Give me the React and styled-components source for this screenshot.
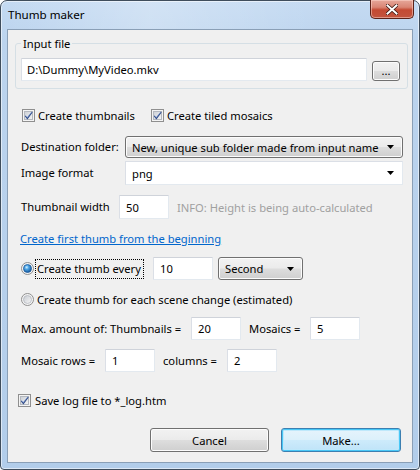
import React from 'react';
import styled, { createGlobalStyle } from 'styled-components';

const GlobalStyle = createGlobalStyle`
  html, body {
    margin: 0;
    padding: 0;
    background: #ffffff;
  }
  body {
    font-family: "Noto Sans", "Liberation Sans", sans-serif;
    font-size: 11.2px;
    color: #000;
  }
  svg {
    flex: none;
  }
`;

const Window = styled.div`
  width: 420px;
  height: 470px;
  box-sizing: border-box;
  display: flex;
  flex-direction: column;
  padding: 0 6px 6px;
  border: 1px solid #3f4d5c;
  border-radius: 7px 7px 4px 4px;
  background: linear-gradient(180deg, #c4daf2 0px, #bcd4ee 40px, #b2cdea 100%);
  box-shadow: inset 0 0 0 1px rgba(255, 255, 255, 0.55);
`;

const TitleBar = styled.div`
  height: 28px;
  display: flex;
  justify-content: space-between;
  align-items: flex-start;
  background: linear-gradient(90deg, rgba(255, 255, 255, 0) 0%, rgba(255, 255, 255, 0.25) 35%, rgba(255, 255, 255, 0) 80%);
`;

const Title = styled.div`
  padding: 6px 0 0 1px;
  font-size: 11.6px;
  line-height: 16px;
`;

const CloseButton = styled.div`
  width: 44px;
  height: 19px;
  margin: -1px -1px 0 0;
  box-sizing: border-box;
  display: flex;
  align-items: center;
  justify-content: center;
  border: 1px solid #5b2219;
  border-top: none;
  border-radius: 0 0 5px 5px;
  background: linear-gradient(180deg, #e6a79a 0%, #d98574 40%, #c44a33 55%, #c2543f 100%);
  box-shadow: inset 0 0 0 1px rgba(255, 220, 210, 0.5);
`;

const Client = styled.div`
  flex: 1;
  display: flex;
  flex-direction: column;
  padding: 6px 5px 0 7px;
  background: #f0f0f0;
  border: 1px solid #8a9fb6;
`;

const GroupBox = styled.fieldset`
  margin: 0;
  padding: 0 7px 7px 5px;
  border: 1px solid #d5dfe5;
  border-radius: 3px;
  display: flex;
  align-items: center;
  gap: 5px;
`;

const Legend = styled.legend`
  padding: 0 2px;
  line-height: 15px;
`;

const Form = styled.div`
  display: flex;
  flex-direction: column;
  padding: 0 4px 0 6px;
`;

const Row = styled.div`
  display: flex;
  align-items: center;
  gap: ${p => p.$gap ?? 8}px;
  margin-top: ${p => p.$top ?? 0}px;
  margin-left: ${p => p.$left ?? 0}px;
  height: ${p => p.$height ?? 16}px;
`;

const Label = styled.span`
  flex: none;
  width: ${p => (p.$width ? `${p.$width}px` : 'auto')};
  white-space: nowrap;
  line-height: 16px;
`;

const Info = styled.span`
  color: #a0a0a0;
  white-space: nowrap;
`;

const TextBox = styled.div`
  flex: none;
  box-sizing: border-box;
  width: ${p => p.$width}px;
  height: ${p => p.$height ?? 23}px;
  display: flex;
  align-items: center;
  padding-left: ${p => p.$pad ?? 6}px;
  background: #ffffff;
  border: 1px solid;
  border-color: #cfd3da #e3e9ef #e3e9ef #dbdfe6;
  border-radius: 1px;
  white-space: nowrap;
`;

const Button = styled.div`
  flex: none;
  box-sizing: border-box;
  width: ${p => p.$width}px;
  height: ${p => p.$height ?? 24}px;
  display: flex;
  align-items: center;
  justify-content: ${p => (p.$left ? 'space-between' : 'center')};
  padding: ${p => (p.$left ? '0 8px 0 6px' : '0')};
  border: 1px solid #707070;
  border-radius: 3px;
  background: linear-gradient(180deg, #f2f2f2 0%, #ebebeb 48%, #dddddd 52%, #cfcfcf 100%);
  box-shadow: inset 0 0 0 1px #fcfcfc;
  white-space: nowrap;
`;

const DefaultButton = styled(Button)`
  border-color: #3c7fb1;
  background: linear-gradient(180deg, #e6f4fc 0%, #dcf0fb 48%, #cdebfb 52%, #bfe3f8 100%);
  box-shadow: inset 0 0 0 1px #48c7f6, inset 0 0 0 2px #bfe8fb;
`;

const Combo = styled.div`
  flex: 1;
  box-sizing: border-box;
  height: 24px;
  display: flex;
  align-items: center;
  justify-content: space-between;
  padding: 0 8px 0 6px;
  background: #ffffff;
  border: 1px solid;
  border-color: #dbdfe6 #e3e9ef #e3e9ef #dbdfe6;
`;

const Link = styled.a`
  color: #0066cc;
  text-decoration: underline;
  line-height: 16px;
  cursor: pointer;
`;

const Option = styled.label`
  flex: none;
  display: flex;
  align-items: center;
  gap: ${p => p.$gap ?? 3}px;
  width: ${p => (p.$width ? `${p.$width}px` : 'auto')};
  white-space: nowrap;
`;

const Focused = styled.span`
  outline: 1px dotted #000;
  outline-offset: 1px;
  line-height: 16px;
  padding-right: 1px;
`;

const Footer = styled.div`
  display: flex;
  justify-content: flex-end;
  gap: 12px;
  margin-top: 20px;
  padding-right: 2px;
`;

const CloseIcon = () => (
  <svg width="12" height="11" viewBox="0 0 12 11">
    <path d="M1.5 1.5 L10.5 9.5 M10.5 1.5 L1.5 9.5" stroke="#3a1610" strokeWidth="3.6" strokeLinecap="square" />
    <path d="M1.5 1.5 L10.5 9.5 M10.5 1.5 L1.5 9.5" stroke="#ffffff" strokeWidth="2" strokeLinecap="square" />
  </svg>
);

const Arrow = () => (
  <svg width="7" height="4" viewBox="0 0 7 4">
    <path d="M0 0 H7 L3.5 4 Z" fill="#000" />
  </svg>
);

const CheckBox = () => (
  <svg width="13" height="13" viewBox="0 0 13 13">
    <defs>
      <linearGradient id="cbIn" x1="0" y1="0" x2="1" y2="1">
        <stop offset="0" stopColor="#cbcfd5" />
        <stop offset="1" stopColor="#f6f6f6" />
      </linearGradient>
    </defs>
    <rect x="0.5" y="0.5" width="12" height="12" fill="#f4f4f4" stroke="#8f8f8f" />
    <rect x="2.5" y="2.5" width="8" height="8" fill="url(#cbIn)" stroke="#b4b8bf" />
    <path d="M3 6.2 L5.3 8.6 L10 2.6 L10.6 3.6 L5.4 10.4 L3 7.6 Z" fill="#2f4a86" />
    <path d="M4 7 L5.3 8.4 L9.6 3.2" stroke="#6d8fd0" strokeWidth="0.6" fill="none" />
  </svg>
);

const Radio = ({ checked }) => (
  <svg width="13" height="13" viewBox="0 0 13 13">
    <defs>
      <radialGradient id="rdOn" cx="0.4" cy="0.35" r="0.7">
        <stop offset="0" stopColor="#d8f4ff" />
        <stop offset="0.35" stopColor="#4fa7e8" />
        <stop offset="1" stopColor="#0d4f93" />
      </radialGradient>
      <linearGradient id="rdOff" x1="0" y1="0" x2="1" y2="1">
        <stop offset="0" stopColor="#c7cbd1" />
        <stop offset="1" stopColor="#f7f7f7" />
      </linearGradient>
    </defs>
    <circle cx="6.5" cy="6.5" r="6" fill="#f4f4f4" stroke="#8f8f8f" />
    <circle cx="6.5" cy="6.5" r="4" fill={checked ? 'url(#rdOn)' : 'url(#rdOff)'} stroke={checked ? '#1f5c9c' : '#b4b8bf'} strokeWidth="0.8" />
  </svg>
);

const App = () => (
  <>
    <GlobalStyle />
    <Window>
      <TitleBar>
        <Title>Thumb maker</Title>
        <CloseButton>
          <CloseIcon />
        </CloseButton>
      </TitleBar>
      <Client>
        <GroupBox>
          <Legend>Input file</Legend>
          <TextBox $width={346} $pad={5} style={{ marginTop: 7 }}>D:\Dummy\MyVideo.mkv</TextBox>
          <Button $width={28} $height={20} style={{ marginTop: 9 }}>...</Button>
        </GroupBox>
        <Form>
          <Row $top={18} $left={1} $gap={17}>
            <Option $width={112}>
              <CheckBox />
              Create thumbnails
            </Option>
            <Option>
              <CheckBox />
              Create tiled mosaics
            </Option>
          </Row>
          <Row $top={13} $height={22} $gap={0}>
            <Label $width={104}>Destination folder:</Label>
            <Button $width={278} $height={22} $left>
              New, unique sub folder made from input name
              <Arrow />
            </Button>
          </Row>
          <Row $top={3} $height={24} $gap={0}>
            <Label $width={104}>Image format</Label>
            <Combo>
              png
              <Arrow />
            </Combo>
          </Row>
          <Row $top={10} $height={24}>
            <Label $width={90}>Thumbnail width</Label>
            <TextBox $width={50} $height={24}>50</TextBox>
            <Info>INFO: Height is being auto-calculated</Info>
          </Row>
          <Row $top={12} $left={-1}>
            <Link>Create first thumb from the beginning</Link>
          </Row>
          <Row $top={10} $height={23} $gap={0}>
            <Option $width={132}>
              <Radio checked />
              <Focused>Create thumb every</Focused>
            </Option>
            <TextBox $width={60}>10</TextBox>
            <Button $width={85} $height={23} $left style={{ marginLeft: 5 }}>
              Second
              <Arrow />
            </Button>
          </Row>
          <Row $top={11}>
            <Option>
              <Radio />
              Create thumb for each scene change (estimated)
            </Option>
          </Row>
          <Row $top={10} $height={23}>
            <Label $width={162}>Max. amount of: Thumbnails =</Label>
            <TextBox $width={50}>20</TextBox>
            <Label $width={53}>Mosaics =</Label>
            <TextBox $width={50}>5</TextBox>
          </Row>
          <Row $top={9} $height={23}>
            <Label $width={76}>Mosaic rows =</Label>
            <TextBox $width={50}>1</TextBox>
            <Label $width={56}>columns =</Label>
            <TextBox $width={50}>2</TextBox>
          </Row>
          <Row $top={20} $left={-3}>
            <Option $gap={4}>
              <CheckBox />
              Save log file to *_log.htm
            </Option>
          </Row>
          <Footer>
            <Button $width={119}>Cancel</Button>
            <DefaultButton $width={120}>Make...</DefaultButton>
          </Footer>
        </Form>
      </Client>
    </Window>
  </>
);

export default App;
